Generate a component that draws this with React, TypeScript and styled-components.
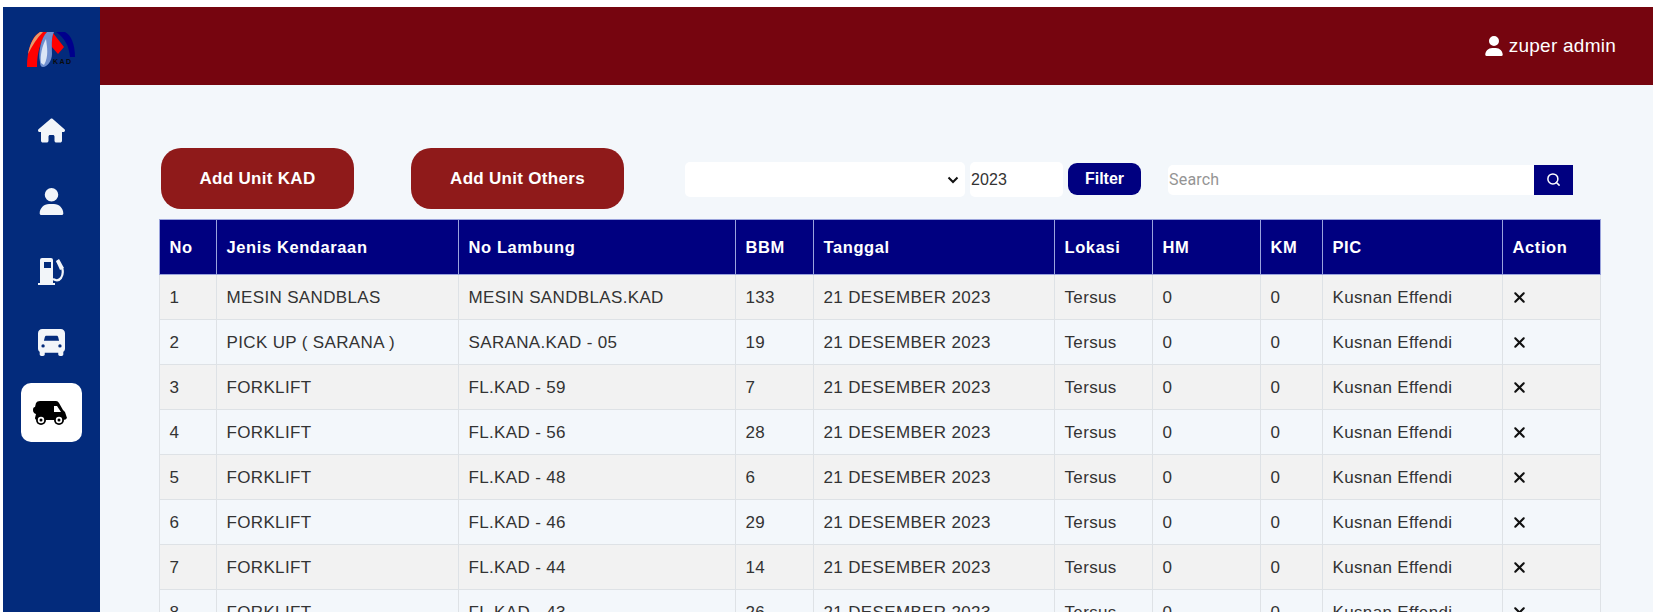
import React from "react";
import styled, { createGlobalStyle } from "styled-components";
import { FaHouse, FaUser, FaTruckFront, FaXmark } from "react-icons/fa6";
import { Search } from "lucide-react";

const Global = createGlobalStyle`
  html, body { margin: 0; padding: 0; height: 616px; overflow: hidden; background: #fff; }
  * { box-sizing: border-box; }
  #root { height: 616px; padding: 7px 5px 4px 3px; font-family: "Liberation Sans", Arial, sans-serif; }
`;

const Frame = styled.div`
  display: flex;
  height: 605px;
  overflow: hidden;
  background: #f3f7fb;
`;

const Sidebar = styled.nav`
  width: 97px;
  flex: none;
  background: #032b7c;
  display: flex;
  flex-direction: column;
  align-items: center;
`;

const LogoBox = styled.div`
  height: 77px;
  padding: 25px 2px 0 0;
  margin-bottom: 17px;
`;

const NavItem = styled.div<{ $active?: boolean }>`
  width: 61px;
  height: 59px;
  margin-bottom: 11.5px;
  border-radius: 10px;
  display: flex;
  align-items: center;
  justify-content: center;
  color: ${(p) => (p.$active ? "#000" : "#f2f5f9")};
  background: ${(p) => (p.$active ? "#fff" : "transparent")};
`;

const Content = styled.div`
  flex: 1;
  min-width: 0;
  display: flex;
  flex-direction: column;
`;

const Header = styled.header`
  height: 78px;
  flex: none;
  background: #76050f;
  color: #fff;
  display: flex;
  align-items: center;
  justify-content: flex-end;
  gap: 5px;
  padding: 0 37px 0 0;
  font-size: 19px;
  letter-spacing: 0.25px;
`;

const Main = styled.main`
  padding: 63px 52px 0 59px;
`;

const Toolbar = styled.div`
  display: flex;
  align-items: center;
  height: 61px;
  margin-bottom: 10px;
  padding-left: 2px;
`;

const AddButton = styled.button<{ $w: number; $mr: number }>`
  width: ${(p) => p.$w}px;
  margin-right: ${(p) => p.$mr}px;
  height: 61px;
  border: 0;
  border-radius: 20px;
  background: #8f1a1a;
  color: #fff;
  font: bold 17px "Liberation Sans", Arial, sans-serif;
  letter-spacing: 0.3px;
`;

const Field = styled.div<{ $w: number; $mr: number }>`
  width: ${(p) => p.$w}px;
  margin: 2px ${(p) => p.$mr}px 0 0;
  height: 35px;
  background: #fff;
  border-radius: 5px;
  display: flex;
  align-items: center;
  font-size: 16px;
  color: #333;
`;

const SelectField = styled(Field)`
  justify-content: flex-end;
  padding-right: 6px;
`;

const YearField = styled(Field)`
  padding-left: 1px;
  letter-spacing: 0.1px;
`;

const FilterButton = styled.button`
  width: 73px;
  height: 32px;
  margin-right: 27px;
  border: 0;
  border-radius: 9px;
  background: #000080;
  color: #fff;
  font: bold 16px "Liberation Sans", Arial, sans-serif;
`;

const SearchBox = styled.div`
  width: 405px;
  height: 30px;
  margin-top: 2px;
  display: flex;
`;

const SearchInput = styled.div`
  flex: 1;
  background: #fff;
  border-radius: 5px 0 0 5px;
  display: flex;
  align-items: center;
  padding-left: 1px;
  color: #949494;
  font: 16px Roboto, sans-serif;
  letter-spacing: 0.2px;
`;

const SearchButton = styled.div`
  width: 39px;
  background: #000080;
  color: #fff;
  display: flex;
  align-items: center;
  justify-content: center;
`;

const Table = styled.table`
  width: 1441px;
  table-layout: fixed;
  border-collapse: collapse;
  font-size: 17px;
  letter-spacing: 0.35px;
`;

const Th = styled.th<{ $w: number }>`
  width: ${(p) => p.$w}px;
  height: 55px;
  padding: 0 9.5px;
  background: #000080;
  color: #fff;
  text-align: left;
  font-weight: bold;
  font-size: 16.5px;
  letter-spacing: 0.6px;
  border: 1px solid #9aa3dc;
`;

const Row = styled.tr<{ $odd: boolean }>`
  background: ${(p) => (p.$odd ? "#f2f2f2" : "transparent")};
`;

const Td = styled.td`
  height: 45px;
  padding: 1px 9.5px 0;
  color: #333;
  border: 1px solid #dee2e6;
  white-space: nowrap;
  & > svg { display: block; margin-left: -2px; }
`;

const columns: [string, number][] = [
  ["No", 57], ["Jenis Kendaraan", 242], ["No Lambung", 277], ["BBM", 78], ["Tanggal", 241],
  ["Lokasi", 98], ["HM", 108], ["KM", 62], ["PIC", 180], ["Action", 98],
];

const rows: [string, string, string][] = [
  ["MESIN SANDBLAS", "MESIN SANDBLAS.KAD", "133"],
  ["PICK UP ( SARANA )", "SARANA.KAD - 05", "19"],
  ["FORKLIFT", "FL.KAD - 59", "7"],
  ["FORKLIFT", "FL.KAD - 56", "28"],
  ["FORKLIFT", "FL.KAD - 48", "6"],
  ["FORKLIFT", "FL.KAD - 46", "29"],
  ["FORKLIFT", "FL.KAD - 44", "14"],
  ["FORKLIFT", "FL.KAD - 43", "26"],
];

const Logo = () => (
  <svg width="48" height="35" viewBox="0 0 48 35" style={{ display: "block" }}>
    <path d="M29 0 H38 C44 3 48 12 48 25 L43 25 C42 14 38 6 29 0 Z" fill="#00008c" />
    <path d="M0 35 C0 18 5 4 13 0 L20 0 C14 8 10 20 10 35 Z" fill="#f00" />
    <path d="M1 22 C3 11 7 4 13 0 L16 0 C10 6 5 14 1 22 Z" fill="#e89a6a" />
    <path d="M26 1 L37 15 L31 22 L24 14 Z" fill="#f00" />
    <path d="M13 30 C11 20 14 6 20 0 L27 0 C24 6 25 14 25 22 C25 29 20 35 16 35 C14 35 13 33 13 30 Z" fill="#6f8fcf" />
    <path d="M14 31 C13 24 15 14 19 7 C20 15 22 24 17 33 Z" fill="#dbe6f6" />
    <text x="26" y="32" fontSize="7" fontWeight="bold" fontFamily="Liberation Sans" letterSpacing="1.5" fill="#0a0a0a">KAD</text>
  </svg>
);

const Pump = () => (
  <svg width="27" height="27" viewBox="0 0 27 27" fill="currentColor">
    <path fillRule="evenodd" d="M4 0 H13 Q15 0 15 2 V25 H17 V27 H0 V25 H2 V2 Q2 0 4 0 Z M6 4 V10 H13 V4 Z" />
    <path d="M15 21 Q20 24 23 20 Q26 15 24 10 Q22 6 19 3" fill="none" stroke="currentColor" strokeWidth="2.2" />
    <path d="M18 3 L21 1 L26 10 L22 12 Z" />
  </svg>
);

const Van = () => (
  <svg width="34" height="24" viewBox="0 0 34 24" style={{ marginRight: 3 }}>
    <path d="M3 2 Q4 0 7 0 H23 Q25 0 26 2 L30 9 Q33 11 33 14 L34 17 Q33 19 30 19 H5 Q2 19 2 17 L3 13 Q0 12 0 9 Q0 6 2 6 Z" fill="#000" />
    <path d="M21 5 h3 l4 6 h-7 Z" fill="#fff" />
    <g>
      <circle cx="8" cy="19" r="5" fill="#000" />
      <circle cx="8" cy="19" r="3.200" fill="#fff" />
      <circle cx="8" cy="19" r="1.500" fill="#000" />
      <circle cx="26" cy="19" r="5" fill="#000" />
      <circle cx="26" cy="19" r="3.200" fill="#fff" />
      <circle cx="26" cy="19" r="1.500" fill="#000" />
    </g>
  </svg>
);

export default function App() {
  return (
    <>
      <Global />
      <Frame>
        <Sidebar>
          <LogoBox><Logo /></LogoBox>
          <NavItem><FaHouse size={27} /></NavItem>
          <NavItem><FaUser size={27} /></NavItem>
          <NavItem><Pump /></NavItem>
          <NavItem><FaTruckFront size={27} /></NavItem>
          <NavItem $active><Van /></NavItem>
        </Sidebar>
        <Content>
          <Header><FaUser size={20} /> zuper admin</Header>
          <Main>
            <Toolbar>
              <AddButton $w={193} $mr={57}>Add Unit KAD</AddButton>
              <AddButton $w={213} $mr={61}>Add Unit Others</AddButton>
              <SelectField $w={280} $mr={5}>
                <svg width="12" height="8" viewBox="0 0 12 8"><path d="M1.5 1.5 6 6l4.500-4.500" fill="none" stroke="#111" strokeWidth="2" /></svg>
              </SelectField>
              <YearField $w={93} $mr={5}>2023</YearField>
              <FilterButton>Filter</FilterButton>
              <SearchBox>
                <SearchInput>Search</SearchInput>
                <SearchButton><Search size={15} strokeWidth={2.4} /></SearchButton>
              </SearchBox>
            </Toolbar>
            <Table>
              <thead>
                <tr>{columns.map(([c, w]) => <Th key={c} $w={w}>{c}</Th>)}</tr>
              </thead>
              <tbody>
                {rows.map(([jenis, lambung, bbm], i) => (
                  <Row key={i} $odd={i % 2 === 0}>
                    <Td>{i + 1}</Td>
                    <Td>{jenis}</Td>
                    <Td>{lambung}</Td>
                    <Td>{bbm}</Td>
                    <Td>21 DESEMBER 2023</Td>
                    <Td>Tersus</Td>
                    <Td>0</Td>
                    <Td>0</Td>
                    <Td>Kusnan Effendi</Td>
                    <Td><FaXmark size={17} color="#111" /></Td>
                  </Row>
                ))}
              </tbody>
            </Table>
          </Main>
        </Content>
      </Frame>
    </>
  );
}
